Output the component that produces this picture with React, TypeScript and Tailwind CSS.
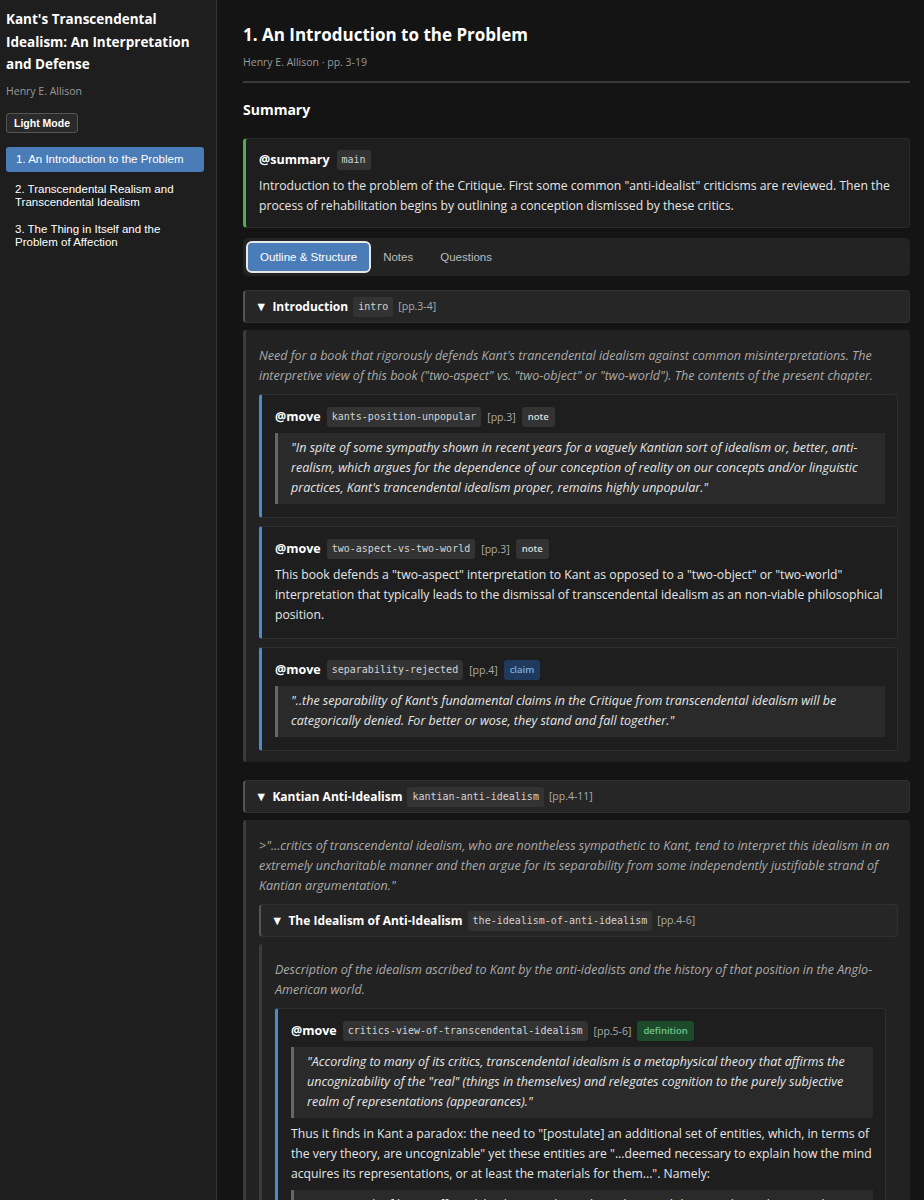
import React from "react";

const sans = "font-['Segoe_UI','Open_Sans','Noto_Sans',sans-serif]";
const arial = "font-['Liberation_Sans',Arial,sans-serif]";

const Code = ({ children }: { children: React.ReactNode }) => (
  <span className="inline-flex h-[20px] items-center rounded-[3px] bg-[#333333] px-[5px] font-['DejaVu_Sans_Mono',monospace] text-[10px] font-normal text-[#d4d4d4]">
    {children}
  </span>
);

const Tag = ({ kind }: { kind: string }) => {
  const color =
    kind === "claim"
      ? "bg-[#1f3a5c] text-[#79aee0]"
      : kind === "definition"
        ? "bg-[#1d4a2b] text-[#6fc48c]"
        : "bg-[#333333] text-[#dddddd]";
  return (
    <span className={`inline-flex h-[20px] items-center rounded-[3px] px-[6px] text-[9.5px] font-semibold ${color}`}>
      {kind}
    </span>
  );
};

const Pages = ({ children }: { children: React.ReactNode }) => (
  <span className="text-[10.5px] font-normal text-[#aaaaaa]">{children}</span>
);

const Quote = ({ children }: { children: React.ReactNode }) => (
  <div className="mt-[6px] border-l-[3px] border-[#666666] bg-[#2a2a2a] pb-[6px] pl-[13px] pr-[12px] pt-[5px] text-[12.5px] italic leading-[20px] text-[#e6e6e6]">
    {children}
  </div>
);

const Text = ({ children }: { children: React.ReactNode }) => (
  <p className="mt-[6px] text-[12.2px] leading-[20px] text-[#e6e6e6]">{children}</p>
);

type MoveProps = {
  id: string;
  pages: string;
  tag: string;
  children: React.ReactNode;
};

const Move = ({ id, pages, tag, children }: MoveProps) => (
  <div className="rounded-[3px] border border-[#2e2e2e] border-l-[3px] border-l-[#4a8ad0] bg-[#1e1e1e] pb-[13px] pl-[13px] pr-[12px] pt-[12px]">
    <div className="flex items-center gap-[6px] leading-[20px]">
      <span className="text-[12.5px] font-bold text-white">@move</span>
      <Code>{id}</Code>
      <Pages>{pages}</Pages>
      <Tag kind={tag} />
    </div>
    {children}
  </div>
);

type SectionProps = {
  title: string;
  id: string;
  pages: string;
  children: React.ReactNode;
};

const Section = ({ title, id, pages, children }: SectionProps) => (
  <div className="flex flex-col gap-[7px]">
    <div className="flex h-[33px] items-center gap-[5px] rounded-[4px] border border-[#303030] border-l-[2px] border-l-[#555555] bg-[#262626] pl-[10px]">
      <span className="text-[12.5px] leading-[14px] text-white">▼</span>
      <span className="text-[12px] font-bold text-white">{title}</span>
      <Code>{id}</Code>
      <Pages>{pages}</Pages>
    </div>
    <div className="flex flex-col gap-[8px] rounded-[3px] border-l-[3px] border-[#3c3c3c] bg-[#222222] pb-[11px] pl-[13px] pr-[12px] pt-[16px]">
      {children}
    </div>
  </div>
);

const Desc = ({ children }: { children: React.ReactNode }) => (
  <p className="text-[12.5px] italic leading-[20px] text-[#aaaaaa]">{children}</p>
);

export default function App() {
  return (
    <div className={`flex min-h-[1200px] bg-[#141414] ${sans}`}>
      <aside className="w-[217px] shrink-0 border-r border-[#333333] bg-[#1e1e1e] pl-[6px] pr-[12px] pt-[8px]">
        <h2 className="text-[13.5px] font-bold leading-[22.5px] text-white">
          Kant's Transcendental Idealism: An Interpretation and Defense
        </h2>
        <div className="mt-[8px] text-[10.5px] text-[#9a9a9a]">Henry E. Allison</div>
        <button
          className={`mt-[14px] rounded-[3px] border border-[#555555] bg-[#2a2a2a] px-[7px] py-[2px] text-[10.5px] font-bold leading-[14px] text-white ${arial}`}
        >
          Light Mode
        </button>
        <nav className={`mt-[14px] flex flex-col gap-[8px] text-[11.5px] leading-[13px] text-white ${arial}`}>
          <div className="rounded-[3px] bg-[#4a7db8] px-[10px] py-[6px]">1. An Introduction to the Problem</div>
          <div className="px-[9px] py-[3px]">2. Transcendental Realism and Transcendental Idealism</div>
          <div className="px-[9px] py-[3px]">3. The Thing in Itself and the Problem of Affection</div>
        </nav>
      </aside>

      <main className="flex-1 pl-[26px] pr-[14px] pt-[23px]">
        <h1 className="text-[17px] font-bold leading-[24px] text-white">1. An Introduction to the Problem</h1>
        <div className="mt-[7px] border-b-2 border-[#3a3a3a] pb-[11px] text-[10.5px] leading-[16px] text-[#9a9a9a]">
          Henry E. Allison · pp. 3-19
        </div>
        <h3 className="mt-[17px] text-[14px] font-bold leading-[20px] text-white">Summary</h3>

        <div className="mt-[18px] rounded-[4px] border border-[#2c2c2c] border-l-[3px] border-l-[#4caf50] bg-[#1e1e1e] pb-[11px] pl-[13px] pr-[8px] pt-[11px]">
          <div className="flex items-center gap-[7px] leading-[20px]">
            <span className="text-[12.5px] font-bold text-white">@summary</span>
            <Code>main</Code>
          </div>
          <Text>
            Introduction to the problem of the Critique. First some common "anti-idealist" criticisms are reviewed. Then the
            process of rehabilitation begins by outlining a conception dismissed by these critics.
          </Text>
        </div>

        <div className={`mt-[10px] flex items-center rounded-[5px] bg-[#232323] p-[5px] text-[11.5px] ${arial}`}>
          <button className="h-[28px] rounded-[4px] bg-[#4a7db8] px-[12px] leading-[16px] text-white outline outline-2 outline-[#e8e8e8]">
            Outline &amp; Structure
          </button>
          <button className="h-[28px] px-[14px] leading-[16px] text-[#bbbbbb]">Notes</button>
          <button className="h-[28px] px-[13px] leading-[16px] text-[#bbbbbb]">Questions</button>
        </div>

        <div className="mt-[14px] flex flex-col gap-[18px]">
          <Section title="Introduction" id="intro" pages="[pp.3-4]">
            <Desc>
              Need for a book that rigorously defends Kant's trancendental idealism against common misinterpretations. The
              interpretive view of this book ("two-aspect" vs. "two-object" or "two-world"). The contents of the present chapter.
            </Desc>
            <Move id="kants-position-unpopular" pages="[pp.3]" tag="note">
              <Quote>
                "In spite of some sympathy shown in recent years for a vaguely Kantian sort of idealism or, better, anti-realism,
                which argues for the dependence of our conception of reality on our concepts and/or linguistic practices, Kant's
                trancendental idealism proper, remains highly unpopular."
              </Quote>
            </Move>
            <Move id="two-aspect-vs-two-world" pages="[pp.3]" tag="note">
              <Text>
                This book defends a "two-aspect" interpretation to Kant as opposed to a "two-object" or "two-world"
                interpretation that typically leads to the dismissal of transcendental idealism as an non-viable philosophical
                position.
              </Text>
            </Move>
            <Move id="separability-rejected" pages="[pp.4]" tag="claim">
              <Quote>
                "..the separability of Kant's fundamental claims in the Critique from transcendental idealism will be
                categorically denied. For better or wose, they stand and fall together."
              </Quote>
            </Move>
          </Section>

          <Section title="Kantian Anti-Idealism" id="kantian-anti-idealism" pages="[pp.4-11]">
            <Desc>
              &gt;"...critics of transcendental idealism, who are nontheless sympathetic to Kant, tend to interpret this idealism in
              an extremely uncharitable manner and then argue for its separability from some independently justifiable strand of
              Kantian argumentation."
            </Desc>
            <Section title="The Idealism of Anti-Idealism" id="the-idealism-of-anti-idealism" pages="[pp.4-6]">
              <Desc>
                Description of the idealism ascribed to Kant by the anti-idealists and the history of that position in the
                Anglo-American world.
              </Desc>
              <Move id="critics-view-of-transcendental-idealism" pages="[pp.5-6]" tag="definition">
                <Quote>
                  "According to many of its critics, transcendental idealism is a metaphysical theory that affirms the
                  uncognizability of the "real" (things in themselves) and relegates cognition to the purely subjective realm of
                  representations (appearances)."
                </Quote>
                <Text>
                  Thus it finds in Kant a paradox: the need to "[postulate] an additional set of entities, which, in terms of the
                  very theory, are uncognizable" yet these entities are "...deemed necessary to explain how the mind acquires its
                  representations, or at least the materials for them...". Namely:
                </Text>
                <Quote>
                  "...as a result of being 'affected' by things in themselves. These and things in themselves must be assumed to
                  exist, even though the theory denies that we have any right to say anything about them."
                </Quote>
              </Move>
            </Section>
          </Section>
        </div>
      </main>
    </div>
  );
}
